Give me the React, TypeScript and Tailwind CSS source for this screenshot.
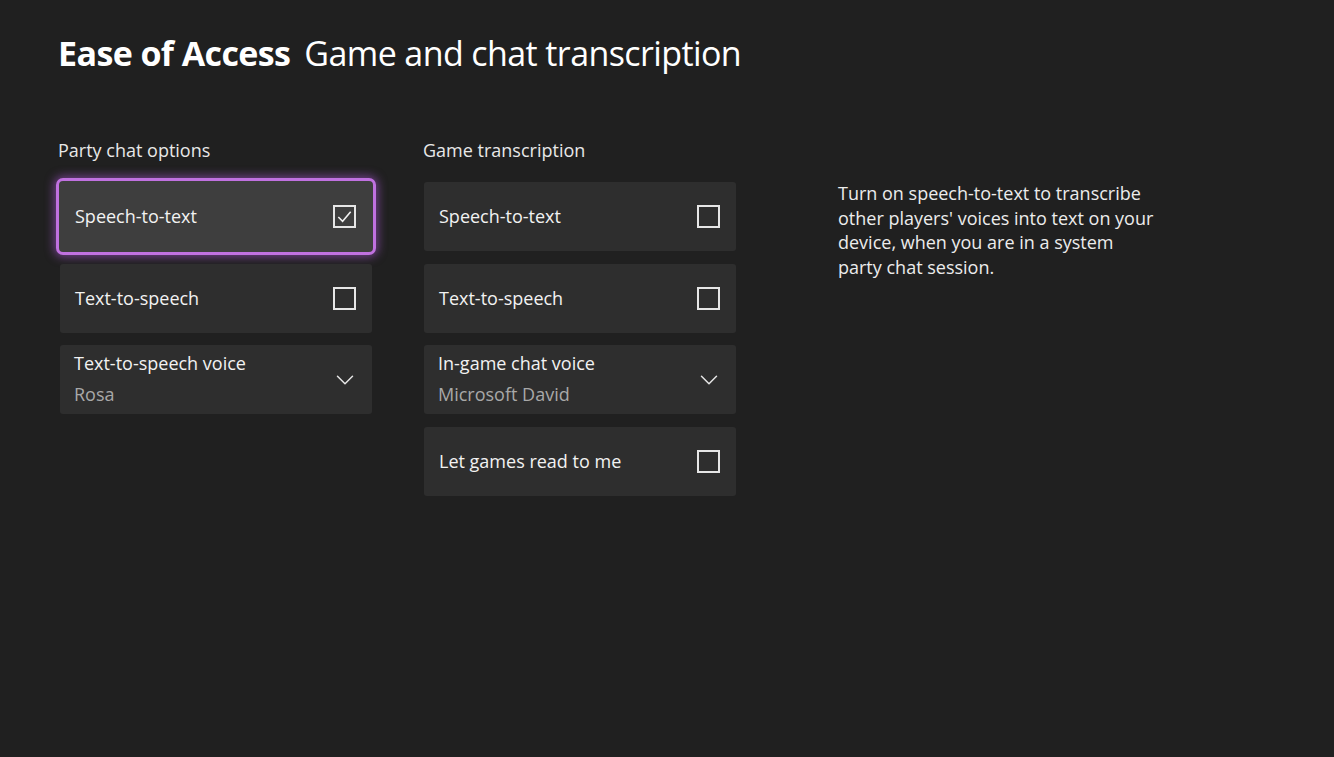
import {ChevronDown} from 'lucide-react';

const body = {fontFamily: '"Open Sans", "Noto Sans", sans-serif'};

function CheckBox({checked}: {checked?: boolean}) {
  return (
    <div className="flex size-[23px] items-center justify-center border-2 border-[#e6e6e6]">
      {checked && (
        <svg viewBox="0 0 20 20" className="size-[19px]" fill="none" stroke="#f0f0f0" strokeWidth="1.7">
          <path d="M3.5 10.5l4.5 4.5 8.5-10" />
        </svg>
      )}
    </div>
  );
}

function ToggleRow({label, checked, focused}: {label: string; checked?: boolean; focused?: boolean}) {
  if (focused) {
    return (
      <div className="-mx-[4px] -my-[4px] flex h-[77px] items-center justify-between rounded-[7px] border-[3px] border-[#c071e0] bg-[#3e3e3e] pl-[16px] pr-[17px] shadow-[0_0_10px_2px_rgba(176,90,220,0.55)]">
        <span className="text-[18px] text-[#f2f2f2]">{label}</span>
        <CheckBox checked={checked} />
      </div>
    );
  }
  return (
    <div className="flex h-[69px] items-center justify-between rounded-[3px] bg-[#2e2e2e] pl-[15px] pr-[16px]">
      <span className="text-[18px] text-[#f2f2f2]">{label}</span>
      <CheckBox checked={checked} />
    </div>
  );
}

function SelectRow({label, value}: {label: string; value: string}) {
  return (
    <div className="flex h-[69px] items-center justify-between rounded-[3px] bg-[#2e2e2e] pl-[14px] pr-[12px]">
      <div className="flex flex-col">
        <span className="text-[18px] leading-[30px] text-[#f2f2f2]">{label}</span>
        <span className="text-[18px] leading-[33px] text-[#a8a8a8]">{value}</span>
      </div>
      <ChevronDown className="size-[30px] text-[#e6e6e6]" strokeWidth={1.2} />
    </div>
  );
}

export default function App() {
  return (
    <div className="h-[757px] w-[1334px] overflow-hidden bg-[#202020] pl-[58px] pt-[28px] text-white" style={body}>
      <h1 className="flex items-baseline gap-[14px] text-[34px] leading-[50px] tracking-[-0.6px]">
        <span className="font-bold">Ease of Access</span>
        <span className="font-normal">Game and chat transcription</span>
      </h1>

      <div className="mt-[60px] flex">
        <div className="w-[314px] pl-[2px]">
          <div className="-ml-[2px] mb-[20px] text-[18px] leading-[24px] text-[#e8e8e8]">Party chat options</div>
          <div className="flex flex-col gap-[12.5px]">
            <ToggleRow label="Speech-to-text" checked focused />
            <ToggleRow label="Text-to-speech" />
            <SelectRow label="Text-to-speech voice" value="Rosa" />
          </div>
        </div>

        <div className="ml-[52px] w-[312px]">
          <div className="-ml-[1px] mb-[20px] text-[18px] leading-[24px] text-[#e8e8e8]">Game transcription</div>
          <div className="flex flex-col gap-[12.5px]">
            <ToggleRow label="Speech-to-text" />
            <ToggleRow label="Text-to-speech" />
            <SelectRow label="In-game chat voice" value="Microsoft David" />
            <ToggleRow label="Let games read to me" />
          </div>
        </div>

        <p className="ml-[102px] mt-[43px] w-[320px] text-[18px] leading-[24.5px] text-[#ececec]">
          Turn on speech-to-text to transcribe other players' voices into text on your device, when you are in a system party chat session.
        </p>
      </div>
    </div>
  );
}
